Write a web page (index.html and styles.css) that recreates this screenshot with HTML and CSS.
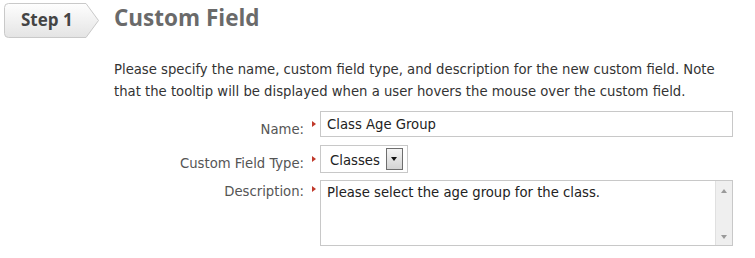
FILE: index.html
```html
<!DOCTYPE html>
<html lang="en">

<head>
    <meta charset="UTF-8">
    <title>Custom Field</title>
    <link rel="stylesheet" href="styles.css">
</head>

<body>
    <div class="header">
        <div class="step">
            <svg class="stepBg" width="104" height="42" viewBox="0 0 104 42">
                <defs>
                    <linearGradient id="stepGrad" x1="0" y1="0" x2="0" y2="1">
                        <stop offset="0" stop-color="#fefefe" />
                        <stop offset="1" stop-color="#e4e4e4" />
                    </linearGradient>
                </defs>
                <path d="M8.5,3.5 H86 L98.5,20.5 L86,37.5 H8.5 Q4.5,37.5 4.5,33.5 V7.5 Q4.5,3.5 8.5,3.5 Z"
                    fill="url(#stepGrad)" stroke="#c9c9c9" />
            </svg>
            <span>Step 1</span>
        </div>
        <h1>Custom Field</h1>
    </div>

    <p class="intro">Please specify the name, custom field type, and description for the new custom field. Note
        that the tooltip will be displayed when a user hovers the mouse over the custom field.</p>

    <div class="form">
        <label class="lbl">Name:</label>
        <span class="req"></span>
        <div class="field"><div class="textBox">Class Age Group</div></div>

        <label class="lbl">Custom Field Type:</label>
        <span class="req"></span>
        <div class="field fieldSel">
            <div class="selectBox">
                <span>Classes</span>
                <span class="dropBtn"><i></i></span>
            </div>
        </div>

        <label class="lbl lblTop">Description:</label>
        <span class="req reqTop"></span>
        <div class="field">
            <div class="areaBox">
                <div class="areaText">Please select the age group for the class.</div>
                <div class="scroll"><i class="up"></i><i class="down"></i></div>
            </div>
        </div>
    </div>
</body>

</html>
```

FILE: styles.css
```css
body {
    margin: 0;
    background-color: #ffffff;
    font-family: "DejaVu Sans Condensed", "DejaVu Sans", sans-serif;
    color: #333333;
}

.header {
    display: flex;
    align-items: flex-start;
    height: 42px;
}

.step {
    position: relative;
    width: 104px;
    height: 42px;
}

.stepBg {
    position: absolute;
    left: 0;
    top: 0;
}

.step span {
    position: relative;
    display: block;
    padding: 8px 0 0 21px;
    font-family: "Open Sans", sans-serif;
    font-weight: bold;
    font-size: 17px;
    color: #444444;
}

h1 {
    margin: 2px 0 0 10px;
    font-family: "Open Sans", sans-serif;
    font-size: 22.5px;
    font-weight: bold;
    color: #6a6a6a;
}

.intro {
    margin: 16px 18px 0 114px;
    font-size: 14.7px;
    line-height: 22px;
    color: #333333;
}

.form {
    display: grid;
    grid-template-columns: 304px 16px 413px;
    margin-top: 9px;
    font-size: 14.7px;
}

.lbl {
    text-align: right;
    color: #555555;
    align-self: center;
}

.lblTop {
    align-self: start;
    padding-top: 2px;
}

.req {
    position: relative;
}

.req::before {
    content: "";
    position: absolute;
    left: 8px;
    top: 50%;
    margin-top: -7px;
    border-left: 4px solid #c0392b;
    border-top: 3px solid transparent;
    border-bottom: 3px solid transparent;
}

.reqTop::before {
    top: 6px;
    margin-top: 0;
}

.field {
    padding-bottom: 8px;
}

.fieldSel {
    padding-bottom: 7px;
}

.textBox {
    height: 24px;
    border: 1px solid #c8c8c8;
    padding-left: 6px;
    line-height: 24px;
    color: #222222;
}

.selectBox {
    display: inline-flex;
    align-items: center;
    height: 26px;
    border: 1px solid #c8c8c8;
    padding: 0 4px 0 9px;
    gap: 6px;
    color: #222222;
}

.dropBtn {
    width: 15px;
    height: 20px;
    border: 1px solid #6e6e6e;
    background: linear-gradient(#f4f4f4, #d4d4d4);
    display: flex;
    align-items: center;
    justify-content: center;
}

.dropBtn i {
    border-top: 4px solid #111111;
    border-left: 3.5px solid transparent;
    border-right: 3.5px solid transparent;
}

.areaBox {
    display: flex;
    height: 64px;
    border: 1px solid #c8c8c8;
}

.areaText {
    flex: 1;
    padding: 2px 6px;
    color: #222222;
}

.scroll {
    width: 16px;
    background: #efefef;
    border-left: 1px solid #e0e0e0;
    display: flex;
    flex-direction: column;
    justify-content: space-between;
    align-items: center;
    padding: 8px 0 6px;
}

.scroll .up {
    border-bottom: 4px solid #9a9a9a;
    border-left: 3.5px solid transparent;
    border-right: 3.5px solid transparent;
}

.scroll .down {
    border-top: 4px solid #9a9a9a;
    border-left: 3.5px solid transparent;
    border-right: 3.5px solid transparent;
}
```
